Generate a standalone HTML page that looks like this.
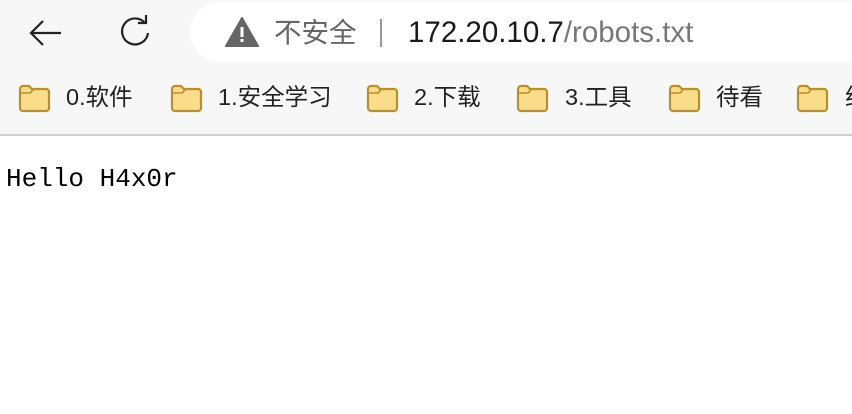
<!DOCTYPE html>
<html><head><meta charset="utf-8"><style>
*{margin:0;padding:0;box-sizing:border-box}
body{width:852px;height:414px;overflow:hidden;background:#fff;font-family:"Liberation Sans","Noto Sans CJK SC",sans-serif;position:relative}
.top{position:absolute;left:0;top:0;width:852px;height:136px;background:#f7f7f7;border-bottom:2px solid #cfcfcf}
.pill{position:absolute;left:190px;top:2px;width:700px;height:60px;background:#fff;border-radius:30px}
.t{position:absolute;white-space:nowrap}
.bm{position:absolute;top:82px;height:30px;font-size:23.5px;color:#222;line-height:30px}
.fold{position:absolute;top:84px;width:33px;height:29px}
</style></head><body>
<div class="top">
<svg class="t" style="left:28px;top:18px" width="36" height="30" viewBox="0 0 36 30"><path d="M33 15H3M15 3L3 15l12 12" fill="none" stroke="#222" stroke-width="2.2"/></svg>
<svg class="t" style="left:116px;top:14px" width="38" height="38" viewBox="0 0 38 38"><path d="M29 9A13 13 0 1 0 32 19" fill="none" stroke="#222" stroke-width="2.2"/><path d="M22 9h8V1" fill="none" stroke="#222" stroke-width="2.2"/></svg>
<div class="pill"></div>
<svg class="t" style="left:225px;top:17px" width="34" height="30" viewBox="0 0 34 30"><path d="M17 1L33 29H1Z" fill="#666" stroke="#666" stroke-linejoin="round" stroke-width="2"/><rect x="15.5" y="10" width="3" height="10" fill="#fff"/><rect x="15.5" y="22" width="3" height="3" fill="#fff"/></svg>
<div class="t" style="left:274px;top:15px;font-size:27.5px;color:#666;line-height:36px">不安全</div>
<div class="t" style="left:380px;top:19px;width:2px;height:28px;background:#999"></div>
<div class="t" style="left:408px;top:15px;font-size:29.5px;color:#1a1a1a;line-height:36px">172.20.10.7<span style="color:#777">/robots.txt</span></div>
</div>
<svg width="0" height="0" style="position:absolute"><defs><symbol id="f" viewBox="0 0 33 29"><path d="M2 5a3 3 0 0 1 3-3h6l3 3h14a3 3 0 0 1 3 3v16a3 3 0 0 1-3 3H5a3 3 0 0 1-3-3Z" fill="#f9dd8a" stroke="#b8902c" stroke-width="2.2"/><path d="M2 9h10l3-3" fill="none" stroke="#b8902c" stroke-width="1.6"/></symbol></defs></svg>
<svg class="fold" style="left:18px"><use href="#f"/></svg><div class="bm" style="left:66px">0.软件</div>
<svg class="fold" style="left:170px"><use href="#f"/></svg><div class="bm" style="left:218px">1.安全学习</div>
<svg class="fold" style="left:366px"><use href="#f"/></svg><div class="bm" style="left:414px">2.下载</div>
<svg class="fold" style="left:516px"><use href="#f"/></svg><div class="bm" style="left:565px">3.工具</div>
<svg class="fold" style="left:668px"><use href="#f"/></svg><div class="bm" style="left:716px">待看</div>
<svg class="fold" style="left:796px"><use href="#f"/></svg><div class="bm" style="left:845px">约</div>
<div class="t" style="left:6px;top:164px;font-family:'Liberation Mono',monospace;font-size:26px;color:#000;line-height:30px">Hello H4x0r</div>
</body></html>
